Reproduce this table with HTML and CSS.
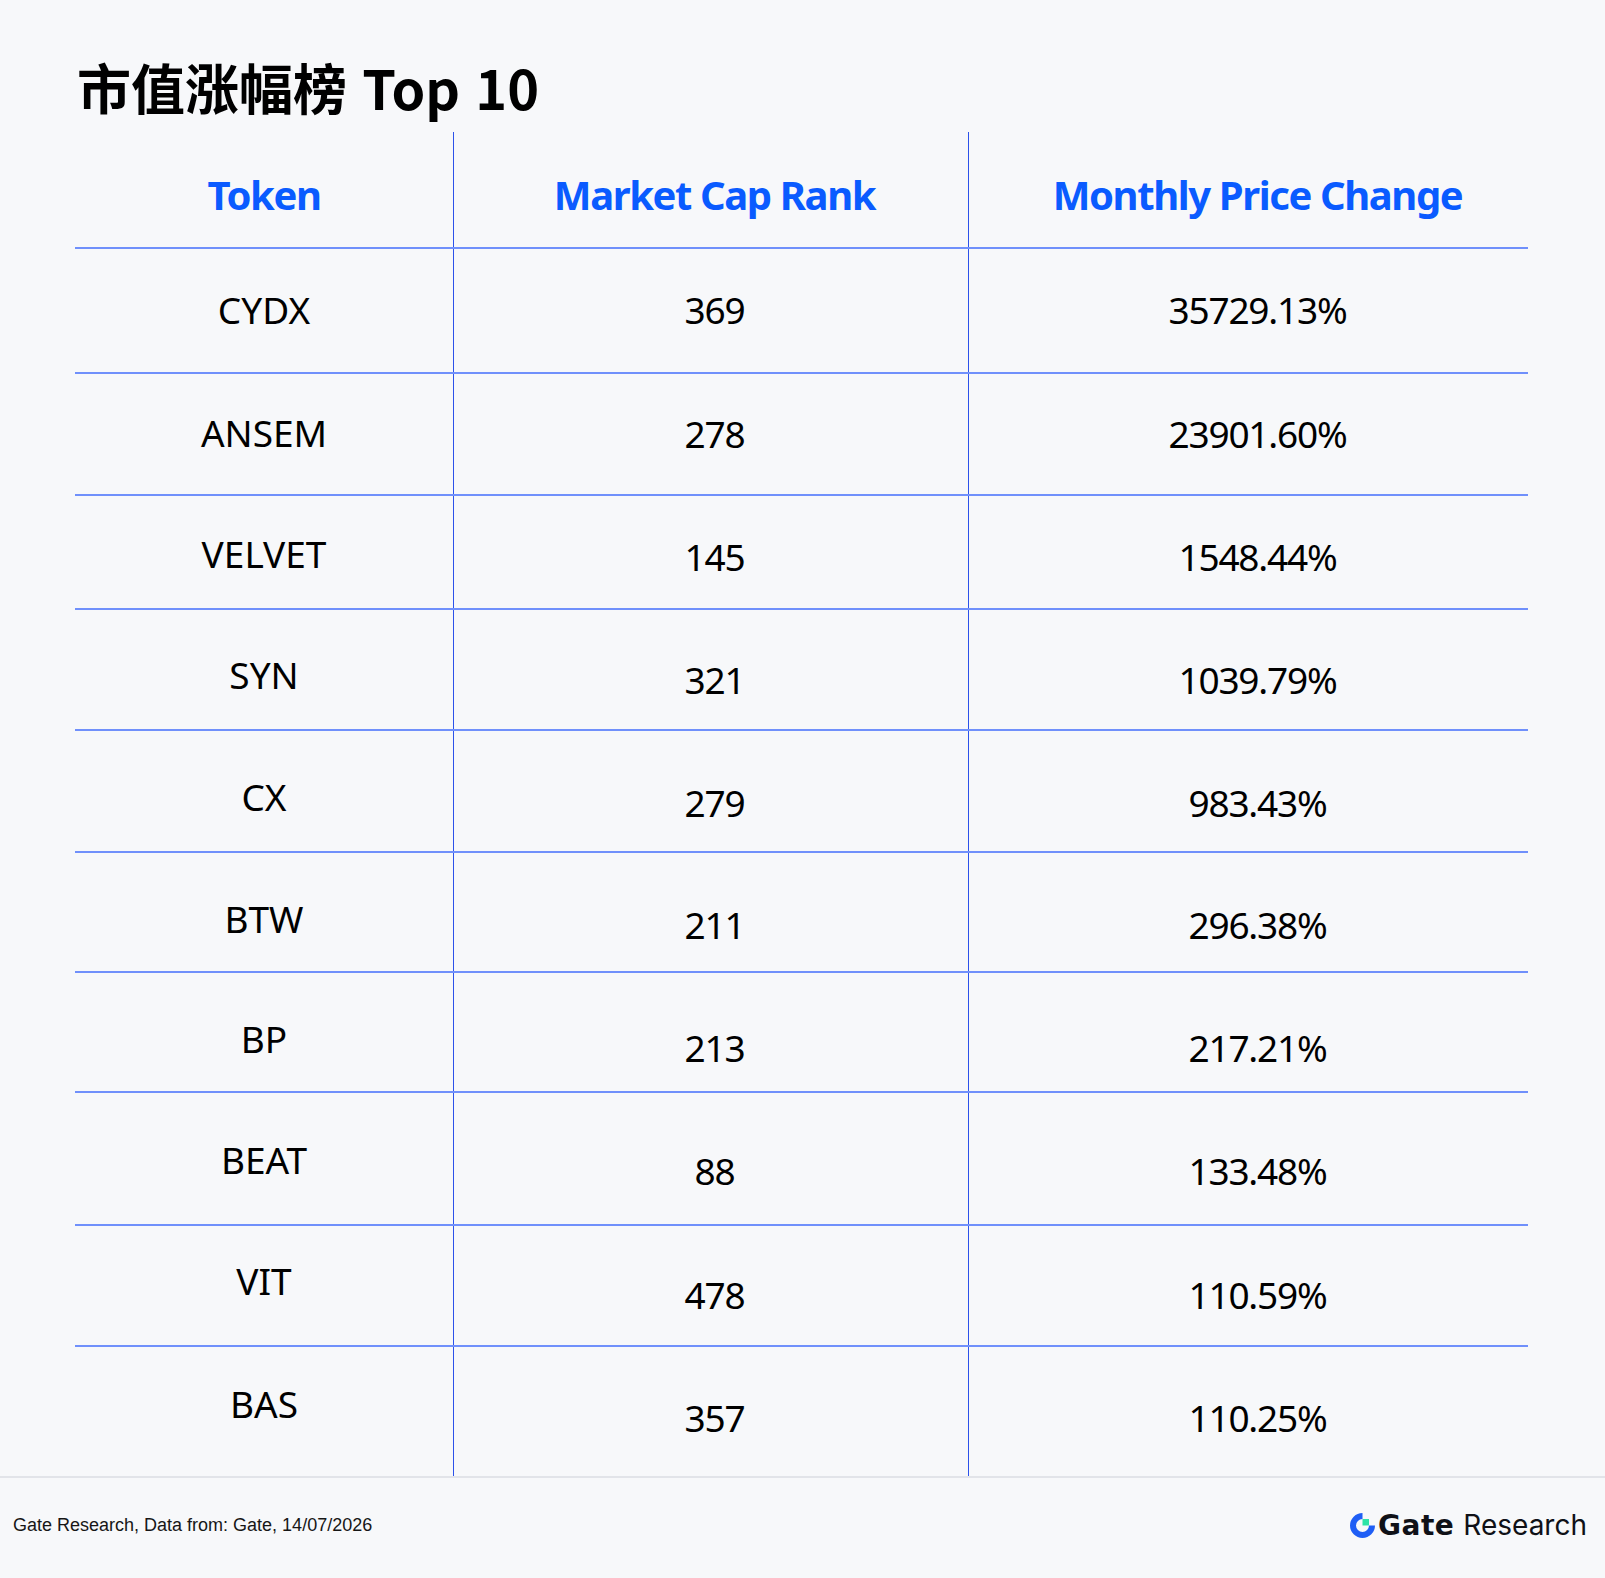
FILE: index.html
```html
<!DOCTYPE html>
<html lang="zh">
<head>
<meta charset="utf-8">
<title>市值涨幅榜 Top 10</title>
<link rel="stylesheet" href="styles.css">
</head>
<body>
<h1 class="title">市值涨幅榜 Top 10</h1>
<div class="table">
  <div class="row head">
    <div class="cell">Token</div>
    <div class="cell">Market Cap Rank</div>
    <div class="cell">Monthly Price Change</div>
  </div>
  <div class="row r1"><div class="cell tok">CYDX</div><div class="cell num">369</div><div class="cell num">35729.13%</div></div>
  <div class="row r2"><div class="cell tok">ANSEM</div><div class="cell num">278</div><div class="cell num">23901.60%</div></div>
  <div class="row r3"><div class="cell tok">VELVET</div><div class="cell num">145</div><div class="cell num">1548.44%</div></div>
  <div class="row r4"><div class="cell tok">SYN</div><div class="cell num">321</div><div class="cell num">1039.79%</div></div>
  <div class="row r5"><div class="cell tok">CX</div><div class="cell num">279</div><div class="cell num">983.43%</div></div>
  <div class="row r6"><div class="cell tok">BTW</div><div class="cell num">211</div><div class="cell num">296.38%</div></div>
  <div class="row r7"><div class="cell tok">BP</div><div class="cell num">213</div><div class="cell num">217.21%</div></div>
  <div class="row r8"><div class="cell tok">BEAT</div><div class="cell num">88</div><div class="cell num">133.48%</div></div>
  <div class="row r9"><div class="cell tok">VIT</div><div class="cell num">478</div><div class="cell num">110.59%</div></div>
  <div class="row r10 last"><div class="cell tok">BAS</div><div class="cell num">357</div><div class="cell num">110.25%</div></div>
</div>
<footer class="footer">
  <div class="source">Gate Research, Data from: Gate, 14/07/2026</div>
  <div class="brand">
    <svg class="brand-icon" viewBox="0 0 25 25" width="25" height="25" aria-hidden="true">
      <path fill="#1f5ef5" d="M12.5 0 A12.5 12.5 0 1 0 25 12.5 H19 A6.5 6.5 0 1 1 12.5 6 Z"/>
      <rect x="12.5" y="6" width="6.5" height="6.5" fill="#2ee3a6"/>
    </svg>
    <span class="brand-gate">Gate</span>
    <span class="brand-research">Research</span>
  </div>
</footer>
</body>
</html>
```
FILE: styles.css
```css
html, body {
  margin: 0;
  padding: 0;
}
body {
  width: 1605px;
  height: 1578px;
  overflow: hidden;
  background: #f7f8fa;
  font-family: "Noto Sans", "Noto Sans CJK SC", sans-serif;
  color: #000;
}
.title {
  margin: 0;
  padding: 57px 0 0 77px;
  font-family: "Noto Sans CJK SC", sans-serif;
  font-weight: 700;
  font-size: 54px;
  line-height: 60px;
  word-spacing: 3px;
  color: #000;
}
.table {
  margin: 15px 0 0 75px;
  width: 1453px;
}
.row {
  display: grid;
  grid-template-columns: 379px 515px 559px;
  box-sizing: border-box;
  border-bottom: 2px solid #7090fb;
}
.row.last {
  border-bottom: none;
}
.cell {
  box-sizing: border-box;
  text-align: center;
  white-space: nowrap;
}
.cell:nth-child(1),
.cell:nth-child(2) {
  border-right: 1px solid #2c52ea;
}
.cell:nth-child(2) {
  padding-left: 7px;
}
.cell:nth-child(3) {
  padding-left: 18px;
}
.head {
  height: 117px;
}
.head .cell {
  font-weight: 700;
  font-size: 40px;
  line-height: 44px;
  letter-spacing: -1.4px;
  color: #0a5bff;
  padding-top: 41px;
}
.row:not(.head) .cell {
  font-size: 37px;
  line-height: 40px;
  font-weight: 400;
}
.row:not(.head) .num {
  letter-spacing: -1.2px;
}
.tok { padding-top: var(--t); }
.num { padding-top: var(--n); }

.r1  { height: 125px; --t: 41px;   --n: 41px; }
.r2  { height: 122px; --t: 39px;   --n: 40px; }
.r3  { height: 114px; --t: 37.5px; --n: 41px; }
.r4  { height: 121px; --t: 45px;   --n: 50px; }
.r5  { height: 122px; --t: 45.5px; --n: 52px; }
.r6  { height: 120px; --t: 45.5px; --n: 52px; }
.r7  { height: 120px; --t: 46px;   --n: 55px; }
.r8  { height: 133px; --t: 47px;   --n: 58px; }
.r9  { height: 121px; --t: 35px;   --n: 49px; }
.r10 { height: 129px; --t: 37px;   --n: 51px; }

.footer {
  box-sizing: border-box;
  height: 102px;
  border-top: 2px solid #e2e4e9;
  display: flex;
  align-items: center;
  justify-content: space-between;
  padding: 0 18px 6px 13px;
}
.source {
  font-family: "Liberation Sans", Arial, sans-serif;
  font-size: 18px;
  color: #161616;
}
.brand {
  display: flex;
  align-items: center;
  color: #0f1117;
}
.brand-icon {
  display: block;
  margin-right: 3px;
}
.brand-gate {
  font-family: "DejaVu Sans", sans-serif;
  font-weight: 700;
  font-size: 28px;
  letter-spacing: 0.5px;
  margin-right: 9px;
}
.brand-research {
  font-family: "Inter", sans-serif;
  font-weight: 400;
  font-size: 28px;
  letter-spacing: 0;
}
```
